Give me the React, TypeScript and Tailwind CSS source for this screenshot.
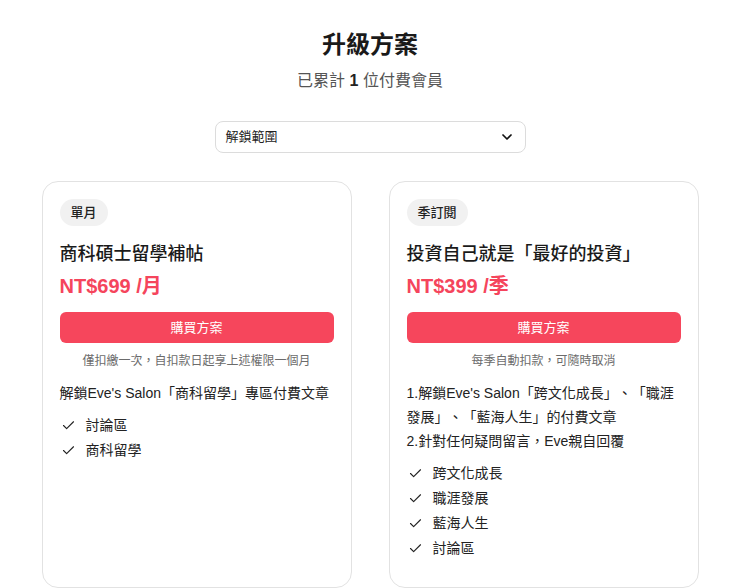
import { Check, ChevronDown } from 'lucide-react'

interface Plan {
  badge: string
  title: string
  price: string
  note: string
  desc: string[]
  features: string[]
}

const PLANS: Plan[] = [
  {
    badge: '單月',
    title: '商科碩士留學補帖',
    price: 'NT$699 /月',
    note: '僅扣繳一次，自扣款日起享上述權限一個月',
    desc: ['解鎖Eve\'s Salon「商科留學」專區付費文章'],
    features: ['討論區', '商科留學'],
  },
  {
    badge: '季訂閱',
    title: '投資自己就是「最好的投資」',
    price: 'NT$399 /季',
    note: '每季自動扣款，可隨時取消',
    desc: [
      '1.解鎖Eve\'s Salon「跨文化成長」、「職涯發展」、「藍海人生」的付費文章',
      '2.針對任何疑問留言，Eve親自回覆',
    ],
    features: ['跨文化成長', '職涯發展', '藍海人生', '討論區'],
  },
]

function PlanCard({ plan }: { plan: Plan }) {
  return (
    <div className="flex flex-col rounded-2xl border border-[#e2e2e2] bg-white px-[17px] pt-[17px] pb-[26px]">
      <div>
        <span className="inline-flex h-[27px] items-center rounded-full bg-[#f1f1f1] px-[11px] text-[13px] font-medium text-[#222]">
          {plan.badge}
        </span>
      </div>

      <h2 className="mt-[14px] text-[18px] leading-7 font-medium text-[#1a1a1a]">{plan.title}</h2>
      <p className="mt-1 text-[20px] leading-7 font-bold text-[#f5455c]">{plan.price}</p>

      <button className="mt-3 h-[31px] w-full rounded-md bg-[#f6465c] text-[13px] text-white">
        購買方案
      </button>
      <p className="mt-[9px] text-center text-[12px] leading-[18px] text-[#6b6b6b]">{plan.note}</p>

      <div className="mt-[11px] text-[14px] leading-6 text-[#222]">
        {plan.desc.map(d => <p key={d}>{d}</p>)}
      </div>

      <ul className="mt-[8px]">
        {plan.features.map(f => (
          <li key={f} className="flex h-[25px] items-center gap-[10px] text-[14px] text-[#222]">
            <Check size={15} strokeWidth={1.8} className="ml-[1px] text-[#222]" />
            {f}
          </li>
        ))}
      </ul>
    </div>
  )
}

export default function App() {
  return (
    <div
      className="min-h-screen bg-white pt-[29px] [text-spacing-trim:space-all]"
      style={{ fontFamily: '"Liberation Sans", "Noto Sans CJK TC", sans-serif' }}
    >
      <div className="flex flex-col items-center">
        <h1 className="text-[24px] leading-8 font-bold text-[#1a1a1a]">升級方案</h1>
        <p className="mt-2 text-[16px] leading-6 text-[#555]">
          已累計 <span className="font-bold text-[#222]">1</span> 位付費會員
        </p>

        <button className="mt-7 flex h-[32px] w-[311px] items-center justify-between rounded-lg border border-[#dcdcdc] bg-white pl-[10px] pr-[10px] text-[13px] text-[#222]">
          解鎖範圍
          <ChevronDown size={16} strokeWidth={2.6} className="text-[#111]" />
        </button>
      </div>

      <div className="mx-auto mt-7 grid w-[657px] grid-cols-2 gap-[37px]">
        {PLANS.map(p => <PlanCard key={p.badge} plan={p} />)}
      </div>
    </div>
  )
}
